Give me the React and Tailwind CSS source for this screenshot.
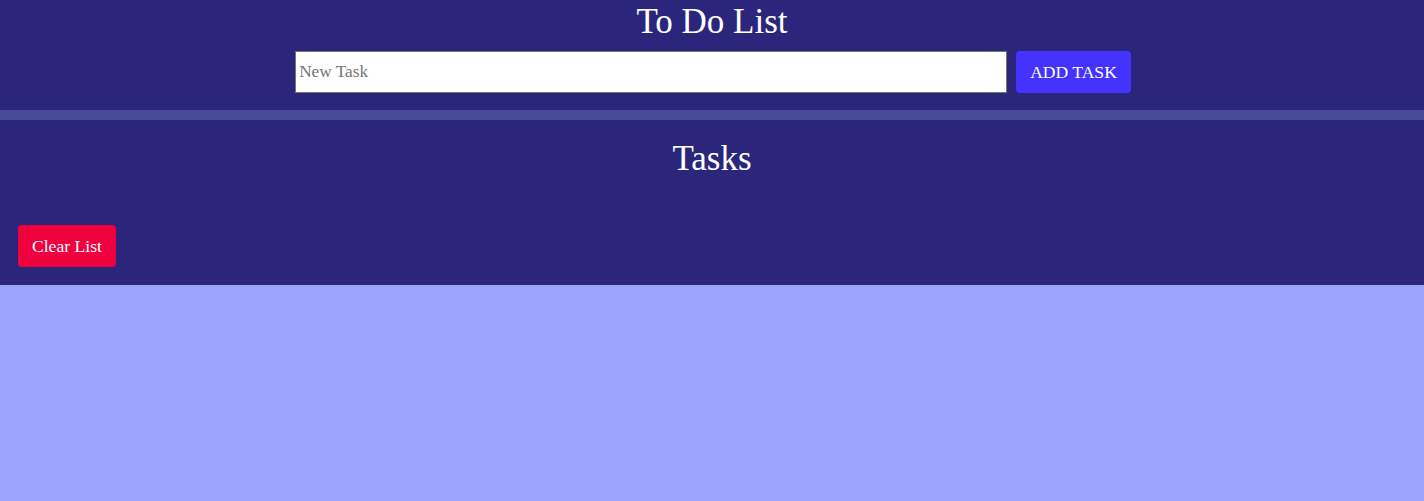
export default function App() {
  return (
    <div className="min-h-[501px] bg-[#9aa4fb]" style={{ fontFamily: '"Liberation Serif", "Times New Roman", serif' }}>
      <header className="bg-[#2b267b] pt-[2px] pb-[17px]">
        <h1 className="text-center text-[35px] leading-[40px] text-white">To Do List</h1>
        <div className="mt-[9px] flex items-center justify-center gap-[9px] pl-[2px]">
          <input
            type="text"
            placeholder="New Task"
            className="h-[42px] w-[712px] border border-[#767676] bg-white px-[3px] text-[17.3px] text-black placeholder:text-[#757575] outline-none"
          />
          <button className="h-[42px] rounded-[4px] bg-[#4433ff] px-[14px] text-[17.6px] text-white">ADD TASK</button>
        </div>
      </header>
      <div className="h-[10px] bg-[#474b9a]" />
      <section className="bg-[#2b267b] pb-[18px]">
        <h2 className="pt-[19px] text-center text-[35px] leading-[40px] text-white">Tasks</h2>
        <div className="mt-[46px] px-[18px]">
          <button className="h-[42px] rounded-[4px] bg-[#ef003f] px-[14px] text-[17.6px] text-white">Clear List</button>
        </div>
      </section>
    </div>
  );
}
